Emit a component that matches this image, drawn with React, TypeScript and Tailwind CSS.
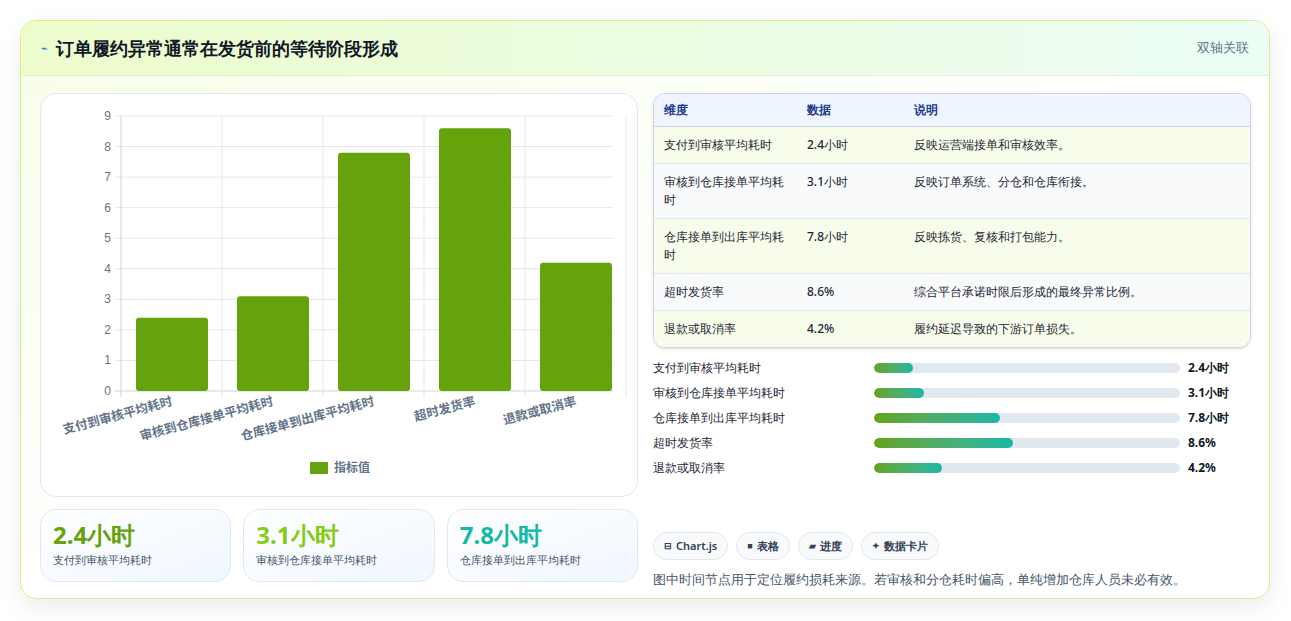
const rows = [
  { k: "支付到审核平均耗时", v: "2.4小时", d: "反映运营端接单和审核效率。", n: 2.4 },
  { k: "审核到仓库接单平均耗时", v: "3.1小时", d: "反映订单系统、分仓和仓库衔接。", n: 3.1 },
  { k: "仓库接单到出库平均耗时", v: "7.8小时", d: "反映拣货、复核和打包能力。", n: 7.8 },
  { k: "超时发货率", v: "8.6%", d: "综合平台承诺时限后形成的最终异常比例。", n: 8.6 },
  { k: "退款或取消率", v: "4.2%", d: "履约延迟导致的下游订单损失。", n: 4.2 },
];

const Chart = () => {
  const x0 = 80, y0 = 297, top = 22, unit = (y0 - top) / 9, cw = 101;
  return (
    <svg width="598" height="403" viewBox="0 0 598 403" className="block">
      {Array.from({ length: 10 }).map((_, i) => (
        <g key={i}>
          <line x1={x0 - 6} x2={572} y1={y0 - i * unit} y2={y0 - i * unit} stroke={i === 0 ? "#cbd5e1" : "#e5e7eb"} />
          <text x={x0 - 10} y={y0 - i * unit + 4} textAnchor="end" fontSize="12" fill="#6b7280" fontFamily="Liberation Sans, sans-serif">{i}</text>
        </g>
      ))}
      {Array.from({ length: 6 }).map((_, i) => (
        <line key={i} x1={x0 + i * cw} x2={x0 + i * cw} y1={top} y2={y0 + 6} stroke={i === 0 ? "#cbd5e1" : "#e5e7eb"} />
      ))}
      {rows.map((r, i) => (
        <g key={r.k}>
          <rect x={x0 + i * cw + 15} y={y0 - r.n * unit} width={72} height={r.n * unit} rx={3} fill="#65a30d" />
          <text transform={`translate(${x0 + i * cw + 52},${y0 + 14}) rotate(-15)`} textAnchor="end" fontSize="12.5" fontWeight="600" fill="#64748b" fontFamily="Noto Sans CJK SC, sans-serif">{r.k}</text>
        </g>
      ))}
      <rect x={269} y={368} width={18} height={12} fill="#65a30d" />
      <text x={293} y={378} fontSize="12" fill="#64748b" fontWeight="600" fontFamily="Noto Sans CJK SC, sans-serif">指标值</text>
    </svg>
  );
};

const pills = [
  { i: "⊟", t: "Chart.js" },
  { i: "■", t: "表格" },
  { i: "▰", t: "进度" },
  { i: "✦", t: "数据卡片" },
];

export default function App() {
  return (
    <div className="w-[1291px] h-[621px] bg-white pt-5 pl-5 font-['Noto_Sans_CJK_SC','Noto_Sans',sans-serif]">
      <div className="w-[1250px] h-[579px] rounded-2xl border border-[#d4f08a] bg-gradient-to-br from-[#f7fee7] via-white to-white shadow-[0_8px_24px_rgba(0,0,0,0.08)] overflow-hidden">
        <div className="h-[55px] flex items-center justify-between px-5 bg-gradient-to-r from-[#ecfccb] to-[#ecfdf5] border-b border-[#e2efd0]">
          <div className="flex items-center gap-2">
            <span className="text-[#2563eb] text-[11px]">⌁</span>
            <h1 className="text-[18px] font-bold text-[#111827]">订单履约异常通常在发货前的等待阶段形成</h1>
          </div>
          <span className="text-[13px] text-[#64748b] font-medium">双轴关联</span>
        </div>
        <div className="flex gap-[15px] pl-[19px] pt-[17px]">
          <div className="w-[598px] flex flex-col gap-3">
            <div className="h-[404px] rounded-2xl border border-[#e2e8f0] bg-white"><Chart /></div>
            <div className="grid grid-cols-3 gap-3">
              {[["2.4小时", "#65a30d"], ["3.1小时", "#84cc16"], ["7.8小时", "#14b8a6"]].map(([v, c], i) => (
                <div key={v} className="h-[73px] rounded-2xl border border-[#e2e8f0] bg-gradient-to-br from-white to-[#f0f7ff] px-3 pt-2">
                  <div className="text-[24px] font-bold leading-[34px]" style={{ color: c }}>{v}</div>
                  <div className="text-[11px] text-[#475569]">{rows[i].k}</div>
                </div>
              ))}
            </div>
          </div>
          <div className="w-[598px] flex flex-col">
            <div className="rounded-xl border border-[#cbd5e1] overflow-hidden text-[12px] shadow-sm">
              <div className="grid grid-cols-[143px_107px_1fr] h-[33px] items-center bg-[#eef5ff] text-[#1e3a8a] font-semibold px-2.5 border-b border-[#cbd5e1]">
                <span>维度</span><span>数据</span><span>说明</span>
              </div>
              {rows.map((r, i) => (
                <div key={r.k} className={`grid grid-cols-[143px_107px_1fr] px-2.5 py-[9px] leading-[18px] text-[#1f2937] font-medium ${i % 2 ? "bg-[#f8fafc]" : "bg-[#f8fdeb]"} ${i < 4 ? "border-b border-[#e2e8f0]" : ""}`}>
                  <span className="pr-3">{r.k}</span><span>{r.v}</span><span>{r.d}</span>
                </div>
              ))}
            </div>
            <div className="mt-[11px] flex flex-col gap-[7px]">
              {rows.map((r) => (
                <div key={r.k} className="flex items-center h-[18px] text-[12px] font-medium text-[#1f2937]">
                  <span className="w-[221px]">{r.k}</span>
                  <div className="w-[306px] h-[10px] rounded-full bg-[#e2e8f0] overflow-hidden">
                    <div className="h-full rounded-full bg-gradient-to-r from-[#65a30d] to-[#14b8a6]" style={{ width: `${(r.n / 19) * 100}%` }} />
                  </div>
                  <span className="ml-2 font-bold text-[#111827]">{r.v}</span>
                </div>
              ))}
            </div>
            <div className="mt-[55px] flex gap-2">
              {pills.map((p) => (
                <span key={p.t} className="h-7 px-2.5 rounded-full border border-[#e2e8f0] bg-[#f8fafc] flex items-center gap-1 text-[11px] font-semibold text-[#334155]">
                  <span className="text-[9px]">{p.i}</span>{p.t}
                </span>
              ))}
            </div>
            <p className="mt-2.5 text-[13px] text-[#475569] font-medium">图中时间节点用于定位履约损耗来源。若审核和分仓耗时偏高，单纯增加仓库人员未必有效。</p>
          </div>
        </div>
      </div>
    </div>
  );
}
